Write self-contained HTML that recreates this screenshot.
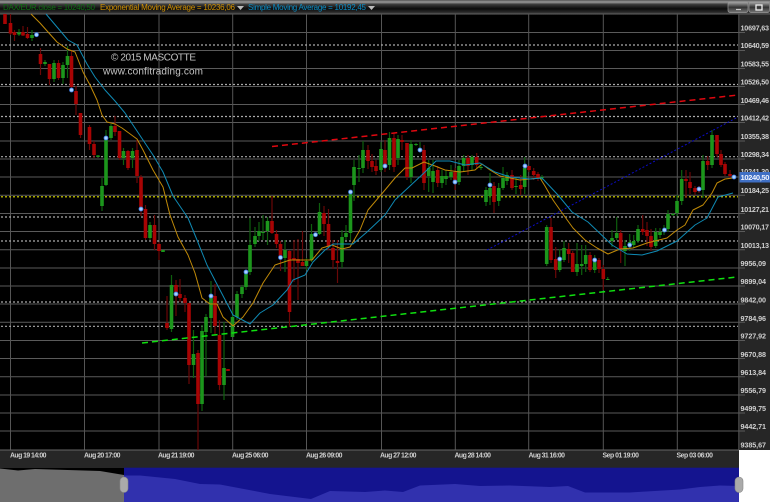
<!DOCTYPE html>
<html><head><meta charset="utf-8"><style>
html,body{margin:0;padding:0;background:#fff;width:770px;height:502px;overflow:hidden}
svg{display:block;position:absolute;left:0;top:0;filter:blur(.35px)}
text{font-family:"Liberation Sans",sans-serif}
.a text{font-size:7.2px;fill:#d0d0d0;font-weight:bold}
.t text{font-size:6.9px;fill:#d0d0d0;font-weight:bold}
</style></head><body>
<svg width="770" height="502" viewBox="0 0 770 502">
<defs><linearGradient id="tb" x1="0" y1="0" x2="0" y2="1">
<stop offset="0" stop-color="#555"/><stop offset=".14" stop-color="#9a9a9a"/><stop offset=".3" stop-color="#3a3a3a"/><stop offset=".6" stop-color="#0c0c0c"/><stop offset=".85" stop-color="#2a2a2a"/><stop offset="1" stop-color="#6a6a6a"/></linearGradient>
<linearGradient id="bt" x1="0" y1="0" x2="0" y2="1"><stop offset="0" stop-color="#aaa"/><stop offset=".5" stop-color="#333"/><stop offset="1" stop-color="#777"/></linearGradient></defs>
<rect width="770" height="502" fill="#000"/>
<rect x="739" y="14" width="31" height="436" fill="#262626"/>
<rect x="0" y="450" width="739" height="18" fill="#262626"/>
<rect x="739" y="450" width="31" height="52" fill="#fff"/>
<rect width="770" height="14.5" fill="url(#tb)"/>

<!-- solid grid -->
<path fill="none" stroke="#5a5a5a" stroke-width="1" d="M0 32.5H745M0 50.5H745M0 68.5H745M0 86.5H745M0 104.5H745M0 122.5H745M0 141H745M0 159H745M0 177H745M0 195.3H745M0 213.5H745M0 231.5H745M0 249.7H745M0 268H745M0 286H745M0 304H745M0 322.3H745M0 340.5H745M0 358.5H745M0 376.7H745M0 395H745M0 413H745M0 431H745"/>
<path fill="none" stroke="#555" stroke-width="1" d="M10.5 14V450M84.5 14V450M159 14V450M232.7 14V450M306.5 14V450M381.5 14V450M455.3 14V450M528.7 14V450M603.3 14V450M677.3 14V450M738.8 14V450"/>
<path stroke="#666" stroke-width="1" d="M0 450H739"/>
<!-- dotted -->
<path fill="none" stroke="#aaa" stroke-width="1.2" stroke-dasharray="2 2" d="M1 45H738M1 84.5H738M1 116.5H738M1 156.7H738M1 217H738M1 241H738M1 302H738M1 326.3H738"/>
<path fill="none" stroke="#e0e000" stroke-width="1.2" stroke-dasharray="2 2" d="M1 196.8H738"/>

<!-- wicks -->
<path fill="none" stroke="#6a0808" stroke-width="1.2" d="M10.5 14V35M14.5 30V41M23 26V36M27.5 27V39M40.5 48V75M49.5 64V85M58.5 60V80M71.5 50V90M76 86V115M80.5 113V138M89.5 125V150M94 141V158M115 116V136M119.5 131V160M128 150V170M137 140V183M141 175V216M145.5 205V240M154.5 215V250M159 242V260M167 296V330M176 280V316M180 279V302M185 295V312M189 303V384M198 350V450M215 284V335M219.5 320V390M272 196V234M276.5 230V248M280.5 241V271M289.5 250V327M294 240V282M298 239V300M302.5 231V266M324 206V236M328.5 209V250M333 240V269M337.5 240V283M368 145V169M372 154V172M376 160V175M385 140V172M394 133V172M402 135V150M407 143V180M424 145V190M437.7 166V187M455 168V190M468 155V175M476.7 153V168M494 182V213M512 170V190M520.7 175V195M529 166V172M533.7 168V180M538 172V181M551 218V263M555.7 247V278M568.7 243V263M572.7 251V272M590 252V272M599 258V273M603.3 265V290M620.7 230V263M642.7 215V235M647 222V246M651 229V251M686 170V198M690 172V194M695 186V195M699 186V193M707.7 156V170M717 135V157M721 150V167M725 162V176M730 170V178"/>
<path fill="none" stroke="#0e5f0e" stroke-width="1.2" d="M19 29V36M32 30V41M45 60V66M54 60V82M63 62V84M67.5 46V78M98 155V157M102 178V211M106 130V186M111 124V140M123.5 148V165M132.5 148V168M150 222V240M171.5 275V332M193.5 330V378M202 325V411M206 314V376M211 281V333M224 322V400M232.5 310V337M237 291V320M242 285V298M246 270V290M250 218V275M255 227V247M259 222V241M263 215V240M267.5 217V245M285 240V272M306.5 258V270M311.5 224V262M319.5 203V235M342 230V268M346 225V240M350.5 192V240M354 160V201M359 155V182M363 141V173M381 142V172M389.5 132V170M398 135V165M411 140V183M416 143V146M420 142V152M428.7 160V192M433 160V193M442 170V188M446 170V185M451 165V180M459 160V185M463.7 155V172M472 155V170M481 165V170M486 187V206M490 173V205M498.7 183V206M503 167V190M507 172V185M516 178V194M524.7 157V194M542 175V180M546.7 225V266M559.7 249V272M564 241V262M577 243V276M581.7 245V275M585.7 245V272M594.7 255V273M607.7 277V280M612 230V247M616.7 217V240M625 240V266M629.7 234V251M633.7 235V248M638 225V243M655.7 228V248M660 228V238M664 225V235M668 210V232M673 213V216M677 195V216M681.7 170V205M703 155V198M712 130V168"/>
<!-- bodies -->
<path fill="none" stroke="#a80404" stroke-width="3.6" d="M5 14V24M10.5 23V33.5M14.5 32V35M23 32V35.5M27.5 34V38M40.5 54V64M49.5 64V79M58.5 63V78M71.5 56V87M76 91V104M80.5 113V135M89.5 127V144M94 144V155M115 126V132M119.5 131V158M128 151V168M137 150V176M141 177V209M145.5 209V238M154.5 225V244M159 244V251M167 323V328M176 285V296M180 294V298M185 298V303M189 303V365M198 353V404M215 296V326M219.5 335V385M228 369V371M272 221V233M276.5 234V244M280.5 244V256M289.5 251V312M294 258V260M298 259V263M302.5 262V266M324 213V224M328.5 224V246M333 248V260M337.5 261V263M368 150V161M372 161V167M376 166V171M385 150V166M394 138V167M402 140V142M407 143V177M424 150V183M437.7 170V183M455 172V182M468 158V166M476.7 157V165M494 186V202M512 175V188M520.7 185V189M529 166V170M533.7 171V175M538 174V178M551 227V260M555.7 259V270M568.7 249V254M572.7 253V272M590 255V270M599 260V269M603.3 269V279M620.7 233V249M642.7 229V232M647 230V236M651 236V247M686 179V181M690 182V188M695 188V192M699 188V191M707.7 161V165M717 135V154M721 154V165M725 164V174M730 174V176"/>
<path fill="none" stroke="#1c961c" stroke-width="3.6" d="M19 32.5V34.5M32 35V38M45 62V64M54 63V79M63 65V78M67.5 56V65M98 155.5V157M102 186V206M106 138V185M111 126V138M123.5 151V158M132.5 151V158M150 225V238M163 250V252M171.5 285V329M193.5 354V365M202 331V404M206 317V332M211 296V318M224 368V385M232.5 317V337M237 294V317M242 287V294M246 273V287M250 245V272M255 236V244M259 231V236M263 232V233M267.5 221V231M285 250V258M306.5 261V266M311.5 234V260M319.5 212V234M342 237V262M346 233V237M350.5 192V233M354 167V185M359 168V169M363 150V168M381 149V170M389.5 138V165M398 139V158M411 144V177M416 144V145M428.7 168V176M433 171V182M442 176V183M446 176V179M451 172V177M459 166V182M463.7 158V166M472 157V165M481 167V168M486 190V202M490 188V196M498.7 188V201M503 178V188M507 175V181M516 186V187M524.7 168V187M542 177V178M546.7 227V264M559.7 259V270M564 248V260M577 264V272M581.7 264V266M585.7 255V264M594.7 261V270M607.7 279V280M612 238V241M616.7 233V238M625 246V251M629.7 242V246M633.7 241V245M638 229V241M655.7 232V246M660 232V235M664 229V232M668 214V229M673 214V215M677 201V213M681.7 179V201M703 161V190M712 135V165"/>

<!-- trend lines -->
<path stroke="#e00810" stroke-width="1.5" stroke-dasharray="6 4" d="M272 146.5L738 95"/>
<path stroke="#0c0cc8" stroke-width="1" stroke-dasharray="2 2" d="M487 250L738 117"/>
<path stroke="#10e010" stroke-width="1.5" stroke-dasharray="6 4" d="M142 343L737 277"/>

<!-- EMA -->
<path fill="none" stroke="#c08a08" stroke-width="1" stroke-linejoin="round" d="M31 14L40 23L48 32L57 42L67 49L75 52L83 72L90 85L97 100L102 115L107 122L115 124L122 128L137 139L143 150L153 170L163 187L170 215L178 237L188 255L195 273L202 298L210 304L217 304L223 317L233 326L243 317L253 303L263 283L275 265L290 260L312 260L322 248L332 245L342 249L350 247L360 230L368 210L385 190L395 178L405 168L412 168L424 162L435 166L445 170L460 172L475 170L482 164L490 170L500 176L520 180L530 179L540 178L545 186L553 200L560 210L573 228L585 240L597 248L608 254L620 249L633 248L647 243L667 238L677 230L685 225L693 210L703 205L712 193L717 183L725 179L733 178"/>
<!-- SMA -->
<path fill="none" stroke="#0f8ab4" stroke-width="1" stroke-linejoin="round" d="M46 14L57 27L68 40L77 45L87 64L95 77L105 90L115 101L125 113L133 125L143 140L153 155L163 172L173 196L188 218L197 240L207 265L220 290L233 315L250 324L260 313L273 305L287 290L293 280L305 275L313 262L325 250L333 244L353 244L367 232L385 215L395 200L410 186L425 172L436 161L450 161L465 165L480 163L495 172L510 177L530 179L542 178L558 195L572 212L588 222L612 245L627 254L642 255L657 251L677 241L695 225L707 218L718 197L733 193"/>

<!-- dots -->
<g fill="#a8d2ff" stroke="#3a78e0" stroke-width=".8"><circle cx="36.5" cy="34.7" r="2"/><circle cx="71.5" cy="90" r="2"/><circle cx="106" cy="138" r="2"/><circle cx="141" cy="209" r="2"/><circle cx="176" cy="294" r="2"/><circle cx="211" cy="296" r="2"/><circle cx="246" cy="272" r="2"/><circle cx="280.5" cy="257.5" r="2"/><circle cx="315.5" cy="234.7" r="2"/><circle cx="350.5" cy="192" r="2"/><circle cx="385" cy="166" r="2"/><circle cx="420" cy="150" r="2"/><circle cx="455" cy="182" r="2"/><circle cx="490" cy="185" r="2"/><circle cx="525" cy="166" r="2"/><circle cx="559.7" cy="259" r="2"/><circle cx="594.7" cy="260" r="2"/><circle cx="629.7" cy="245" r="2"/><circle cx="664.5" cy="230" r="2"/><circle cx="699" cy="189" r="2"/><circle cx="734" cy="177" r="2"/></g>

<!-- watermark -->
<text x="111" y="60.500" font-size="10" fill="#c4c4c4" textLength="85">© 2015 MASCOTTE</text>
<text x="103" y="74.500" font-size="10" fill="#c4c4c4" textLength="100">www.confitrading.com</text>

<!-- title -->
<text x="3" y="10" font-size="8" fill="#0e6e12" textLength="92">DAX/EUR.close = 10240,50</text>
<text x="100" y="10" font-size="8" fill="#d09000" textLength="135">Exponential Moving Average = 10236,06</text>
<path d="M237 6H244L240.5 10Z" fill="#bbb"/>
<text x="248" y="10" font-size="8" fill="#0a8cc4" textLength="118">Simple Moving Average = 10192,45</text>
<path d="M368 6H375L371.5 10Z" fill="#bbb"/>
<g fill="url(#bt)" stroke="#999" stroke-width=".7"><rect x="728" y="2" width="20" height="10.5" rx="2"/><rect x="749" y="2" width="20.5" height="10.5" rx="2"/></g>
<path d="M736 9.5H741" stroke="#ccc" stroke-width="1.2"/>
<rect x="756" y="5" width="6" height="5" fill="none" stroke="#eee" stroke-width="1.3"/>

<!-- price axis -->
<g class="a">
<text x="740.500" y="30.500" textLength="28.500">10697,63</text>
<text x="740.500" y="47.800" textLength="28.500">10640,59</text>
<text x="740.500" y="66.500" textLength="28.500">10583,55</text>
<text x="740.500" y="84.500" textLength="28.500">10526,50</text>
<text x="740.500" y="103" textLength="28.500">10469,46</text>
<text x="740.500" y="120.500" textLength="28.500">10412,42</text>
<text x="740.500" y="139" textLength="28.500">10355,38</text>
<text x="740.500" y="157" textLength="28.500">10298,34</text>
<text x="740.500" y="174" textLength="28.500">10241,30</text>
<text x="740.500" y="193" textLength="28.500">10184,25</text>
<text x="740.500" y="211.800" textLength="28.500">10127,21</text>
<text x="740.500" y="229.500" textLength="28.500">10070,17</text>
<text x="740.500" y="248" textLength="28.500">10013,13</text>
<text x="740.500" y="265.800" textLength="25.500">9956,09</text>
<text x="740.500" y="284" textLength="25.500">9899,04</text>
<text x="740.500" y="302.500" textLength="25.500">9842,00</text>
<text x="740.500" y="320.800" textLength="25.500">9784,96</text>
<text x="740.500" y="338.500" textLength="25.500">9727,92</text>
<text x="740.500" y="357" textLength="25.500">9670,88</text>
<text x="740.500" y="374.800" textLength="25.500">9613,84</text>
<text x="740.500" y="393" textLength="25.500">9556,79</text>
<text x="740.500" y="410.800" textLength="25.500">9499,75</text>
<text x="740.500" y="429" textLength="25.500">9442,71</text>
<text x="740.500" y="447.500" textLength="25.500">9385,67</text>
</g>
<rect x="739.5" y="172" width="30.5" height="10.5" fill="#3f6fc4"/>
<text x="740.500" y="180" font-size="7.6" font-weight="bold" fill="#f0f4ff" textLength="29">10240,50</text>

<!-- time axis -->
<g class="t">
<text x="10" y="457.500" textLength="36.500">Aug 19 14:00</text>
<text x="84" y="457.500" textLength="36.500">Aug 20 17:00</text>
<text x="158" y="457.500" textLength="36.500">Aug 21 19:00</text>
<text x="232" y="457.500" textLength="36.500">Aug 25 06:00</text>
<text x="306" y="457.500" textLength="36.500">Aug 26 09:00</text>
<text x="380" y="457.500" textLength="36.500">Aug 27 12:00</text>
<text x="454.500" y="457.500" textLength="36.500">Aug 28 14:00</text>
<text x="528.500" y="457.500" textLength="36.500">Aug 31 16:00</text>
<text x="602.500" y="457.500" textLength="36.500">Sep 01 19:00</text>
<text x="676.500" y="457.500" textLength="36.500">Sep 03 06:00</text>
</g>

<!-- navigator -->
<path d="M0 468.500L18 470.500L35 469L100 471L124 475V502H0Z" fill="#6e6e6e"/>
<rect x="124" y="467.700" width="615" height="34.300" fill="#14148f"/>
<path d="M124 475.500L140 475.500L175 479L200 484L220 484.500L270 494L311 499L330 491L365 492L385 490.500L403 492L420 485.500L455 484L480 486L510 485.500L550 487L568 486L585 492.500L630 492.500L680 489.500L700 487L720 485.500L739 486V502H124Z" fill="#3131ae"/>
<rect x="120" y="477" width="8" height="15.500" rx="4" fill="#aaa" stroke="#888" stroke-width=".6"/>
<rect x="735" y="477" width="8" height="15.500" rx="4" fill="#aaa" stroke="#888" stroke-width=".6"/>
</svg>
</body></html>
